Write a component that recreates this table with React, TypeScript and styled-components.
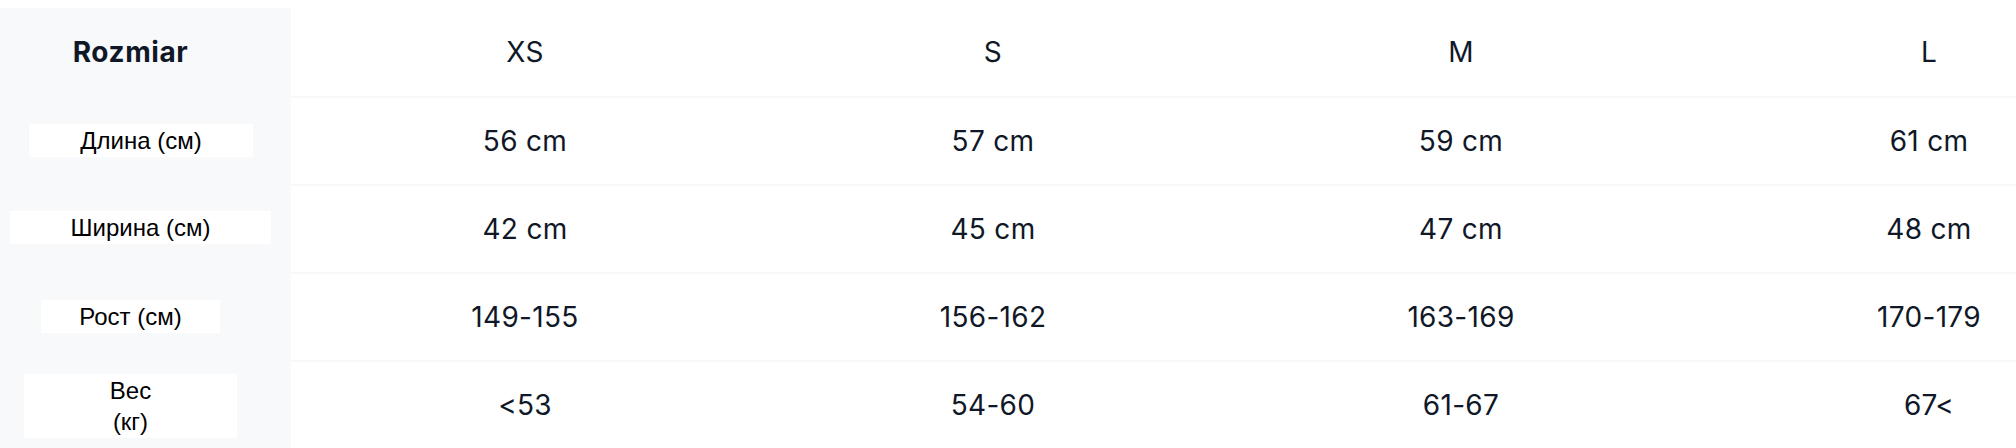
import React from "react";
import styled, { createGlobalStyle } from "styled-components";

const Global = createGlobalStyle`
  html, body { margin: 0; padding: 0; background: #ffffff; height: 448px; overflow: hidden; }
  body { padding-top: 8px; box-sizing: border-box; }
`;

const Wrap = styled.div`
  width: 2016px;
  overflow: hidden;
`;

const Table = styled.div`
  display: grid;
  grid-template-columns: 291px repeat(4, 468px);
  grid-auto-rows: 88px;
  width: 2163px;
  font-family: Inter, "Liberation Sans", sans-serif;
  color: #101828;
`;

const LabelCell = styled.div`
  background: #f8f9fb;
  display: flex;
  align-items: center;
  justify-content: flex-start;
`;

const HeadLabel = styled(LabelCell)`
  justify-content: center;
  font-weight: 700;
  font-size: 28px;
  letter-spacing: 0.6px;
  padding-right: 30px;
`;

const LabelBox = styled.span<{ $w: number; $left: number; $dy?: number }>`
  display: block;
  width: ${(p) => p.$w}px;
  margin-left: ${(p) => p.$left}px;
  margin-top: ${(p) => p.$dy ?? 0}px;
  background: #ffffff;
  font-family: "Liberation Sans", Arial, sans-serif;
  font-size: 24px;
  line-height: 31px;
  padding: 1px 0;
  text-align: center;
  color: #000000;
`;

const Cell = styled.div<{ $first?: boolean }>`
  display: flex;
  align-items: center;
  justify-content: center;
  font-size: 28px;
  letter-spacing: 0.3px;
  font-weight: 400;
  border-top: ${(p) => (p.$first ? "none" : "2px solid #f6f7f8")};
  box-sizing: border-box;
`;

const sizes = ["XS", "S", "M", "L"];

const rows: { label: React.ReactNode; w: number; left: number; dy?: number; values: string[] }[] = [
  { label: "Длина (см)", w: 224, left: 29, values: ["56 cm", "57 cm", "59 cm", "61 cm"] },
  { label: "Ширина (см)", w: 261, left: 10, dy: -2, values: ["42 cm", "45 cm", "47 cm", "48 cm"] },
  { label: "Рост (см)", w: 179, left: 41, values: ["149-155", "156-162", "163-169", "170-179"] },
  {
    label: (
      <>
        Вес
        <br />
        (кг)
      </>
    ),
    w: 213,
    left: 24,
    dy: 4,
    values: ["<53", "54-60", "61-67", "67<"],
  },
];

export default function App() {
  return (
    <Wrap>
      <Global />
      <Table>
        <HeadLabel>Rozmiar</HeadLabel>
        {sizes.map((s) => (
          <Cell key={s} $first>
            {s}
          </Cell>
        ))}
        {rows.map((r, i) => (
          <React.Fragment key={i}>
            <LabelCell>
              <LabelBox $w={r.w} $left={r.left} $dy={r.dy}>
                {r.label}
              </LabelBox>
            </LabelCell>
            {r.values.map((v, j) => (
              <Cell key={j}>{v}</Cell>
            ))}
          </React.Fragment>
        ))}
      </Table>
    </Wrap>
  );
}
